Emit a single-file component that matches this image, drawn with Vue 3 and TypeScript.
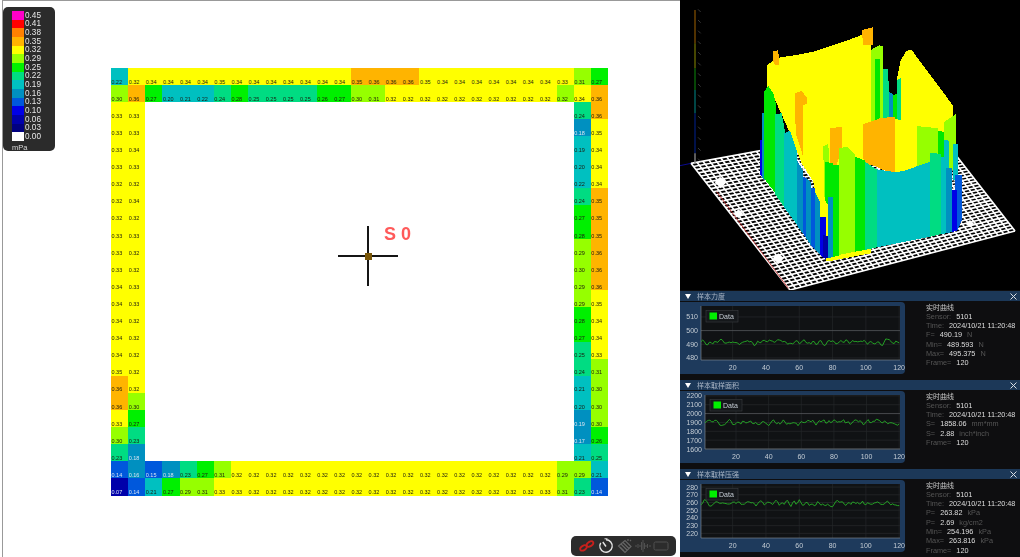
<script setup lang="ts">
// values are in hundredths; the third digit only decides the colour band
const TOP = [21.8, 32, 34, 34, 34, 34, 34.8, 34, 34, 34, 34, 34, 34, 34, 35.2, 36, 36, 36, 34.8, 34, 34, 34, 34, 34, 34, 34, 33, 31, 27]
const SECOND = [30, 36, 27, 20, 21, 21.8, 24, 28, 24.8, 24.8, 24.8, 24.8, 26, 27, 30, 31, 32, 32, 32, 32, 32, 32, 32, 32, 32, 32, 31.8, 34, 36]
const FOOT = [14, 16, 15, 18, 23, 27, 31, 32, 32, 32, 32, 32, 32, 32, 32, 32, 32, 32, 32, 32, 32, 32, 32, 32, 32, 32, 29, 29, 21]
const LAST = [7, 14, 21, 27, 29, 31, 33, 33, 32, 32, 32, 32, 32, 32, 32, 32, 32, 32, 32, 32, 32, 32, 32, 32, 32, 33, 31, 23, 14]
const LEFT = [
  [33, 33], [33, 33], [33, 34], [33, 33], [32, 32], [32, 34], [32, 32], [33, 33], [33, 32], [33, 32], [34, 33],
  [34, 33], [34, 32], [34, 32], [34, 32], [34.8, 32], [36, 32], [36, 30], [33, 27], [30, 23], [23, 18]
]
const RIGHT = [
  [24, 36], [18, 34.8], [19.3, 34], [20, 34], [21.8, 34], [24, 35.2], [27, 35.2], [28, 35.2], [29, 36], [30, 36], [29, 36],
  [29, 34.8], [28, 34], [27, 34], [24.8, 33], [24, 31], [21, 30], [20, 30], [18.8, 30], [17, 26], [21, 24.8]
]

const LEGEND = [
  { at: 45, label: '0.45', color: '#ff00c8' },
  { at: 41, label: '0.41', color: '#ff0000' },
  { at: 38, label: '0.38', color: '#ff8000' },
  { at: 35, label: '0.35', color: '#ffb400' },
  { at: 32, label: '0.32', color: '#ffff00' },
  { at: 29, label: '0.29', color: '#96ff00' },
  { at: 25.5, label: '0.25', color: '#00f000' },
  { at: 22, label: '0.22', color: '#00dc82' },
  { at: 19, label: '0.19', color: '#00c0c0' },
  { at: 16, label: '0.16', color: '#0090c0' },
  { at: 13, label: '0.13', color: '#0058dc' },
  { at: 10, label: '0.10', color: '#0000e6' },
  { at: 6, label: '0.06', color: '#0000aa' },
  { at: 3, label: '0.03', color: '#000080' },
  { at: 0, label: '0.00', color: '#ffffff' }
]

function bandColor(v: number) {
  const band = LEGEND.find((b) => v >= b.at)
  return band ? band.color : '#ffffff'
}

type Cell = { text: string; bg: string; light: boolean }

function toCell(v: number | null): Cell {
  if (v === null) return { text: '', bg: 'transparent', light: false }
  return { text: (v / 100).toFixed(2), bg: bandColor(v), light: v < 19 }
}

const cells: Cell[] = []
const rows: (number | null)[][] = [TOP, SECOND]
LEFT.forEach((l, i) => {
  rows.push([...l, ...new Array<null>(25).fill(null), ...RIGHT[i]])
})
rows.push(FOOT, LAST)
for (const row of rows) {
  for (const v of row) cells.push(toCell(v))
}

// 3D view, coordinates in 3x pixels of the 340x295 viewport
const C: Record<string, string> = {
  y: '#ffff00', a: '#ffb400', g: '#96ff00', e: '#00e800', m: '#00dc82',
  t: '#00c0c0', s: '#0090c0', b: '#0058dc', u: '#0000e6', n: '#0000aa'
}
const shapes: [string, string][] = [
  ['y', '650,240 662,180 680,152 695,150 820,318 820,350 800,400 650,400'],
  ['m', '650,240 662,235 664,400 650,400'],
  ['s', '617,268 642,285 650,290 650,400 617,400'],
  ['e', '640,285 650,282 650,400 640,400'],
  ['m', '600,210 625,206 628,400 600,400'],
  ['g', '572,150 597,136 610,138 610,400 572,400'],
  ['e', '585,178 600,178 600,400 585,400'],
  ['y', '262,195 275,185 300,172 350,165 400,155 450,138 500,122 545,105 572,100 572,760 440,785 400,545 365,490 330,400 290,310 262,260'],
  ['a', '278,155 295,150 297,195 285,195 278,180'],
  ['a', '545,90 578,82 578,135 550,135'],
  ['a', '345,280 365,272 382,295 382,312 370,315 368,465 347,400'],
  ['a', '550,372 600,355 645,350 645,520 610,510 590,500 555,490 550,475'],
  ['y', '645,355 710,380 712,500 680,512 645,520'],
  ['g', '710,378 775,385 775,490 712,500'],
  ['e', '775,392 792,396 792,480 775,480'],
  ['g', '793,365 828,342 828,510 793,510'],
  ['t', '792,420 808,422 808,510 792,510'],
  ['t', '818,432 835,432 835,540 818,540'],
  ['a', '450,385 485,380 485,450 470,495 450,495'],
  ['g', '430,438 445,432 448,490 432,600'],
  ['e', '435,485 458,490 458,640 435,600'],
  // left wall
  ['u', '240,420 248,420 248,530 240,525'],
  ['s', '247,340 254,340 254,540 247,533'],
  ['e', '252,275 265,258 280,280 288,310 288,582 252,535'],
  ['m', '285,342 305,340 315,395 315,625 285,582'],
  ['t', '312,400 330,392 350,450 352,675 312,622'],
  ['s', '350,480 368,510 368,700 350,675'],
  ['b', '368,530 380,535 380,715 368,700'],
  ['s', '378,535 392,545 392,735 378,715'],
  ['b', '392,565 405,565 405,750 392,735'],
  ['s', '405,575 420,605 420,765 405,750'],
  ['u', '420,650 438,650 438,777 420,765'],
  ['n', '428,705 445,708 445,775 430,775'],
  // front wall
  ['s', '444,590 460,590 460,770 445,775'],
  ['e', '460,495 477,495 477,768 460,770'],
  ['g', '477,445 500,440 525,462 525,755 477,765'],
  ['e', '525,470 555,482 555,750 525,755'],
  ['m', '555,485 590,508 590,742 555,750'],
  ['t', '590,508 650,517 680,510 750,485 750,710 590,742'],
  ['m', '750,458 783,462 783,702 750,710'],
  ['t', '783,470 798,470 798,700 783,702'],
  ['s', '798,505 815,505 815,696 798,700'],
  ['u', '815,570 832,570 832,692 815,696'],
  ['b', '825,525 845,525 845,662 832,692 832,570 825,570']
]

const FLOOR = { l: [33, 490], t: [745, 359], r: [1005, 693], b: [330, 870] }
const mix = (p: number[], q: number[], k: number) => [p[0] + (q[0] - p[0]) * k, p[1] + (q[1] - p[1]) * k]
const floorLines: number[][] = []
const STEPS = 40
for (let i = 0; i <= STEPS; i++) {
  const k = i / STEPS
  const a = mix(FLOOR.l, FLOOR.t, k)
  const b = mix(FLOOR.b, FLOOR.r, k)
  floorLines.push([a[0], a[1], b[0], b[1]])
  const c = mix(FLOOR.l, FLOOR.b, k)
  const d = mix(FLOOR.t, FLOOR.r, k)
  floorLines.push([c[0], c[1], d[0], d[1]])
}
const axisParts = [
  { y1: 30, y2: 130, color: '#7a4a00' },
  { y1: 130, y2: 205, color: '#6a6a00' },
  { y1: 205, y2: 270, color: '#0a6a0a' },
  { y1: 270, y2: 340, color: '#006a6a' },
  { y1: 340, y2: 460, color: '#001a70' },
  { y1: 460, y2: 490, color: '#8a8a8a' }
]
const axisTicks = Array.from({ length: 15 }, (_, i) => 32 + i * 32)

type Info = { label: string; value: string; unit?: string }
type Chart = {
  title: string
  top: number
  plotLeft: number
  ticks: number[]
  hi: number | null
  max: number
  min: number
  mean: number
  swing: number
  seed: number
  legendX: number
  rows: Info[]
}

const charts: Chart[] = [
  {
    title: '样本力度', top: 4, plotLeft: 21, ticks: [510, 500, 490, 480], hi: 500, max: 518, min: 478.5,
    mean: 491.5, swing: 2.8, seed: 11, legendX: 26,
    rows: [
      { label: 'F=', value: '490.19', unit: 'N' },
      { label: 'Min=', value: '489.593', unit: 'N' },
      { label: 'Max=', value: '495.375', unit: 'N' }
    ]
  },
  {
    title: '样本取样面积', top: 4, plotLeft: 25, ticks: [2200, 2100, 2000, 1900, 1800, 1700, 1600], hi: 2000, max: 2210, min: 1600,
    mean: 1900, swing: 40, seed: 29, legendX: 30,
    rows: [
      { label: 'S=', value: '1858.06', unit: 'mm*mm' },
      { label: 'S=', value: '2.88', unit: 'inch*inch' }
    ]
  },
  {
    title: '样本取样压强', top: 4, plotLeft: 21, ticks: [280, 270, 260, 250, 240, 230, 220], hi: null, max: 284, min: 214,
    mean: 259, swing: 5, seed: 47, legendX: 26,
    rows: [
      { label: 'P=', value: '263.82', unit: 'kPa' },
      { label: 'P=', value: '2.69', unit: 'kg/cm2' },
      { label: 'Min=', value: '254.196', unit: 'kPa' },
      { label: 'Max=', value: '263.816', unit: 'kPa' }
    ]
  }
]

const PLOT_H = 54
const PLOT_R = 220
const xTicks = [20, 40, 60, 80, 100, 120]

function xOf(c: Chart, v: number) {
  return c.plotLeft + ((PLOT_R - c.plotLeft) * (v - 1)) / 119.5
}
function yOf(c: Chart, v: number) {
  return c.top + (PLOT_H * (c.max - v)) / (c.max - c.min)
}
function linePath(c: Chart) {
  let s = c.seed
  let prev = 0
  let d = ''
  for (let i = 1; i <= 120; i++) {
    s = (s * 9301 + 49297) % 233280
    const n = (s / 233280 - 0.5) * 2
    // a little smoothing, the real trace wanders more than it jumps
    const k = (n + prev) / 2
    prev = n
    const v = c.mean + k * c.swing
    d += `${i === 1 ? 'M' : 'L'}${xOf(c, i).toFixed(1)} ${yOf(c, v).toFixed(1)}`
  }
  return d
}
</script>

<template>
  <div class="page">
    <div class="left">
      <div class="heat">
        <div
          v-for="(c, i) in cells"
          :key="i"
          class="cell"
          :class="{ light: c.light }"
          :style="{ background: c.bg }"
        >{{ c.text }}</div>
      </div>

      <div class="legend">
        <div v-for="b in LEGEND" :key="b.label" class="legend-row">
          <i :style="{ background: b.color }"></i>
          <span>{{ b.label }}</span>
        </div>
        <div class="legend-unit">mPa</div>
      </div>

      <div class="cross">
        <i class="cross-v"></i>
        <i class="cross-h"></i>
        <i class="cross-dot"></i>
      </div>
      <div class="sensor-name">S 0</div>

      <div class="tools">
        <svg width="18" height="14" viewBox="0 0 18 14">
          <g fill="none" stroke="#c9201c" stroke-width="1.8">
            <ellipse cx="5.500" cy="9" rx="3.600" ry="2.200" transform="rotate(-32 5.500 9)" />
            <ellipse cx="12" cy="5" rx="3.600" ry="2.200" transform="rotate(-32 12 5)" />
          </g>
        </svg>
        <svg width="16" height="16" viewBox="0 0 16 16">
          <path d="M8 1.800a6.200 6.200 0 1 1-5.300 3" fill="none" stroke="#e4e4e4" stroke-width="1.400" />
          <path d="M4.800 4 8 8.500" stroke="#e4e4e4" stroke-width="1.400" />
          <path d="M6.500 .8h3" stroke="#e4e4e4" stroke-width="1" />
        </svg>
        <svg width="16" height="16" viewBox="0 0 16 16">
          <g stroke="#646464" stroke-width="1.200" fill="none">
            <path d="M1.500 8 8 2.500l6 6-6 6z" />
            <path d="M4 6l6 6M6 4.500l6 6M3 9l4 4" />
            <path d="M11 1v2M13 3l1-1" />
          </g>
        </svg>
        <svg width="16" height="14" viewBox="0 0 16 14">
          <path
            d="M0 7h2M3 5v4M5 6v2M6.500 3v8M8 1v12M9.500 4v6M11 6v2M12.500 5v4M14 7h2"
            stroke="#505050"
            stroke-width="1"
            fill="none"
          />
        </svg>
        <svg width="16" height="10" viewBox="0 0 16 10">
          <rect x="1" y="1" width="14" height="8" rx="1.500" fill="none" stroke="#505050" stroke-width="1" />
        </svg>
      </div>
    </div>

    <div class="right">
      <div class="view3d">
        <svg width="340" height="290" viewBox="0 0 1020 870">
          <line x1="0" y1="497" x2="33" y2="490" stroke="#0a0a90" stroke-width="3" />
          <line
            v-for="(l, i) in floorLines"
            :key="i"
            :x1="l[0]"
            :y1="l[1]"
            :x2="l[2]"
            :y2="l[3]"
            stroke="#fff"
            stroke-width="5"
          />
          <line x1="110" y1="575" x2="325" y2="865" stroke="#c02020" stroke-width="2.500" />
          <g fill="#fff">
            <polygon points="120,530 140,547 122,565 104,547" />
            <polygon points="176,628 190,642 176,654 160,642" />
            <polygon points="295,760 312,775 295,792 278,775" />
            <polygon points="870,660 882,671 870,682 856,671" />
          </g>
          <line
            v-for="a in axisParts"
            :key="a.y1"
            x1="45"
            x2="45"
            :y1="a.y1"
            :y2="a.y2"
            :stroke="a.color"
            stroke-width="4"
          />
          <line
            v-for="t in axisTicks"
            :key="t"
            x1="54"
            x2="62"
            :y1="t - 4"
            :y2="t + 4"
            stroke="#555"
            stroke-width="2"
          />
          <polygon
            v-for="(s, i) in shapes"
            :key="i"
            :points="s[1]"
            :fill="C[s[0]]"
            shape-rendering="crispEdges"
          />
        </svg>
      </div>

      <section v-for="c in charts" :key="c.title" class="panel">
        <header class="panel-head">
          <i class="tri"></i>
          <span class="panel-title">{{ c.title }}</span>
          <svg class="close" width="7" height="7" viewBox="0 0 7 7">
            <path d="M.5.5l6 6M6.500.5l-6 6" stroke="#d8dde4" stroke-width="1" />
          </svg>
        </header>
        <div class="panel-body">
          <div class="card">
            <svg width="225" height="72" viewBox="0 0 225 72">
              <rect :x="c.plotLeft" :y="c.top" :width="PLOT_R - c.plotLeft" :height="PLOT_H" fill="#101214" />
              <line
                v-for="x in xTicks"
                :key="x"
                :x1="xOf(c, x)"
                :x2="xOf(c, x)"
                :y1="c.top"
                :y2="c.top + PLOT_H"
                stroke="#24272a"
                stroke-width="0.700"
              />
              <line
                v-for="t in c.ticks"
                :key="t"
                :x1="c.plotLeft"
                :x2="PLOT_R"
                :y1="yOf(c, t)"
                :y2="yOf(c, t)"
                :stroke="t === c.hi ? '#55585c' : '#24272a'"
                stroke-width="0.800"
              />
              <line :x1="c.plotLeft" :x2="c.plotLeft" :y1="c.top" :y2="c.top + PLOT_H" stroke="#8a939c" stroke-width="0.600" />
              <line :x1="c.plotLeft" :x2="PLOT_R" :y1="c.top + PLOT_H" :y2="c.top + PLOT_H" stroke="#8a939c" stroke-width="0.600" />
              <path :d="linePath(c)" fill="none" stroke="#26b026" stroke-width="0.900" />
              <text
                v-for="t in c.ticks"
                :key="'y' + t"
                :x="c.plotLeft - 3"
                :y="yOf(c, t) + 2.500"
                class="tick"
                text-anchor="end"
              >{{ t }}</text>
              <text
                v-for="x in xTicks"
                :key="'x' + x"
                :x="xOf(c, x)"
                y="67.500"
                class="tick"
                text-anchor="middle"
              >{{ x }}</text>
              <rect :x="c.legendX" y="8.500" width="32" height="11.500" fill="#15181b" stroke="#3a3d40" stroke-width="0.600" />
              <rect :x="c.legendX + 3.500" y="10.500" width="7.500" height="7" fill="#00f000" />
              <text :x="c.legendX + 13" y="16.800" class="tick">Data</text>
            </svg>
          </div>
          <div class="info">
            <div class="info-title">实时曲线</div>
            <div class="info-row"><span class="lbl">Sensor:</span><span class="val">5101</span></div>
            <div class="info-row"><span class="lbl">Time:</span><span class="val">2024/10/21 11:20:48</span></div>
            <div v-for="(r, i) in c.rows" :key="i" class="info-row">
              <span class="lbl">{{ r.label }}</span>
              <span class="val">{{ r.value }}</span>
              <span class="lbl">{{ r.unit }}</span>
            </div>
            <div class="info-row"><span class="lbl">Frame=</span><span class="val">120</span></div>
          </div>
        </div>
      </section>
    </div>
  </div>
</template>

<style scoped>
.page {
  display: flex;
  width: 1020px;
  height: 557px;
  overflow: hidden;
  font-family: "Liberation Sans", "Noto Sans CJK SC", sans-serif;
}

/* the reference is a scaled capture, everything in it is slightly soft */
.heat,
.legend,
.sensor-name,
.tools,
.view3d svg,
.panel-head,
.panel-body {
  filter: blur(0.35px);
}

.left {
  position: relative;
  width: 680px;
  height: 557px;
  box-sizing: border-box;
  padding: 68px 0 0 111px;
  background: #fff;
}

.left::before {
  content: "";
  position: absolute;
  inset: 0 0 0 2px;
  border-top: 1px solid #999;
  border-left: 1px solid #999;
  pointer-events: none;
}

.heat {
  display: grid;
  grid-template-columns: repeat(29, 1fr);
  grid-template-rows: repeat(25, 1fr);
  width: 497px;
  height: 427.5px;
}

.cell {
  display: flex;
  align-items: flex-end;
  padding: 0 0 0.5px 0.5px;
  font-size: 5.5px;
  line-height: 6px;
  color: #1c1c10;
  overflow: hidden;
}

.cell.light {
  color: #d8e4f0;
}

.legend {
  position: absolute;
  left: 3px;
  top: 7px;
  width: 52px;
  height: 144px;
  box-sizing: border-box;
  padding: 4px 0 0 9px;
  background: #2b2b2b;
  border-radius: 5px;
}

.legend-row {
  display: flex;
  height: 8.67px;
  align-items: center;
}

.legend-row i {
  display: block;
  width: 12px;
  height: 8.67px;
}

.legend-row span {
  margin-left: 1px;
  font-size: 8.2px;
  color: #e8e8e8;
}

.legend-unit {
  margin-top: 2px;
  font-size: 7.5px;
  line-height: 9px;
  color: #d8d8d8;
}

.cross {
  position: absolute;
  left: 338px;
  top: 226px;
  width: 60px;
  height: 60px;
}

.cross-v,
.cross-h,
.cross-dot {
  position: absolute;
  display: block;
}

.cross-v {
  left: 29px;
  top: 0;
  width: 2px;
  height: 60px;
  background: #151515;
}

.cross-h {
  left: 0;
  top: 29px;
  width: 60px;
  height: 2px;
  background: #151515;
}

.cross-dot {
  left: 26.500px;
  top: 26.500px;
  width: 7px;
  height: 7px;
  background: #7a5708;
}

.sensor-name {
  position: absolute;
  left: 384px;
  top: 224px;
  font-size: 18px;
  font-weight: 700;
  line-height: 21px;
  color: #ff5a5a;
}

.tools {
  position: absolute;
  left: 571px;
  top: 536px;
  display: flex;
  align-items: center;
  justify-content: space-between;
  width: 105px;
  height: 20px;
  box-sizing: border-box;
  padding: 0 7px;
  background: #2c2c2c;
  border-radius: 5px;
}

.right {
  display: flex;
  flex-direction: column;
  width: 340px;
  height: 557px;
  background: #000;
}

.view3d {
  height: 290px;
  overflow: hidden;
}

.view3d svg {
  display: block;
}

.panel {
  display: flex;
  flex-direction: column;
  height: 89px;
  background: #0e0e10;
}

.panel-head {
  display: flex;
  align-items: center;
  height: 10px;
  margin-top: 1px;
  padding: 0 3px 0 5px;
  background: #1c3858;
}

.tri {
  display: block;
  width: 0;
  height: 0;
  border-left: 3px solid transparent;
  border-right: 3px solid transparent;
  border-top: 5px solid #fff;
}

.panel-title {
  margin-left: 6px;
  font-size: 7px;
  color: #a8b4c4;
}

.close {
  margin-left: auto;
}

.panel-body {
  display: flex;
  padding-top: 1px;
}

.card {
  width: 225px;
  height: 72px;
  background: #1e3a5c;
  border-radius: 0 4px 4px 0;
}

.card svg {
  display: block;
}

.tick {
  font-size: 7px;
  fill: #c4ccd4;
}

.info {
  margin-left: 21px;
  padding-top: 0.5px;
  font-size: 7.300px;
  line-height: 9.330px;
}

.info-title {
  color: #c8c8c8;
  font-size: 7px;
}

.info-row {
  display: flex;
  gap: 5px;
  white-space: nowrap;
}

.lbl {
  color: #555;
}

.val {
  color: #dcdcdc;
}
</style>

<style>
html,
body {
  margin: 0;
  background: #fff;
}
</style>
